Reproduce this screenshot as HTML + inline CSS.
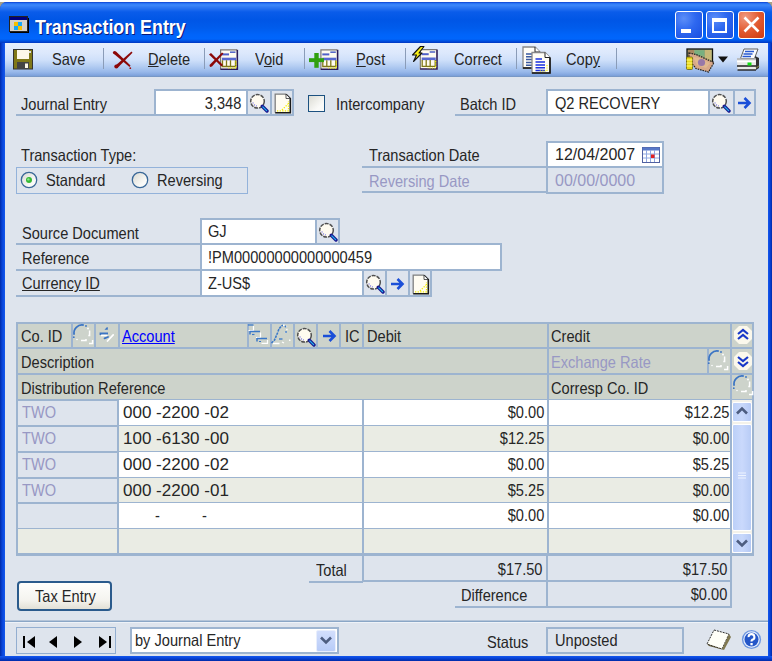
<!DOCTYPE html><html><head><meta charset="utf-8"><style>
html,body{margin:0;padding:0;width:772px;height:661px;overflow:hidden;background:#fff}
.a{position:absolute}
.t{position:absolute;font-family:"Liberation Sans",sans-serif;font-size:16.5px;line-height:18px;white-space:pre;color:#262626;transform:scaleX(0.885);transform-origin:left center}
.g{color:#9898c4}
.u{text-decoration:underline}
.ul{text-decoration:underline}
</style></head><body>
<div class="a" style="left:0px;top:2px;width:8px;height:8px;background:#a8a088"></div>
<div class="a" style="left:764px;top:2px;width:8px;height:8px;background:#a8a088"></div>
<div class="a" style="left:0px;top:2px;width:772px;height:659px;background:#0a3ed8;border-radius:7px 7px 0 0"></div>
<div class="a" style="left:0px;top:2px;width:772px;height:41px;border-radius:7px 7px 0 0;background:linear-gradient(#0a3fd0 0px,#2a74f4 1.5px,#3d88fa 3px,#2a74f2 6px,#0a5cea 10px,#0056e6 18px,#005cec 26px,#0064fa 33px,#0066fc 37px,#004ad8 39.5px,#0036c0 41px)"></div>
<div class="a" style="left:0px;top:43px;width:5px;height:618px;background:linear-gradient(90deg,#002aa8,#0844d8 45%,#1458ee)"></div>
<div class="a" style="left:768px;top:43px;width:4px;height:618px;background:linear-gradient(90deg,#1458ee,#0844d8 50%,#002aa8)"></div>
<div class="a" style="left:0px;top:656px;width:772px;height:5px;background:linear-gradient(#1458ee,#0844d8 45%,#002aa8)"></div>
<div class="a" style="left:5px;top:43px;width:763px;height:613px;background:#dee4ed"></div>
<svg class="a" style="left:9px;top:16px" width="20" height="17" viewBox="0 0 20 17"><rect x="0.5" y="0.5" width="18" height="15" fill="#d4d0c8" stroke="#222" stroke-width="1"/><rect x="1" y="1" width="17" height="3" fill="#000080"/><rect x="19" y="2" width="1" height="15" fill="#000"/><rect x="1" y="16" width="19" height="1" fill="#000"/><rect x="5" y="6" width="4" height="4" fill="#f8c000"/><rect x="9" y="6" width="4" height="4" fill="#18a8f8"/><rect x="5" y="10" width="4" height="4" fill="#18a8f8"/><rect x="9" y="10" width="4" height="4" fill="#f8c000"/></svg>
<div class="a" style="left:35px;top:15.5px;font-family:'Liberation Sans',sans-serif;font-weight:bold;font-size:19.5px;line-height:22px;color:#fff;text-shadow:1px 1px 0 #0a1878;white-space:pre;transform:scaleX(0.915);transform-origin:left center">Transaction Entry</div>
<div class="a" style="left:675px;top:11px;width:26px;height:26px;border:1px solid #fff;border-radius:3px;background:radial-gradient(circle at 30% 25%,#5c8ef8 0%,#2e68f0 45%,#1a4fe0 100%);overflow:hidden"><div class="a" style="left:5px;top:17px;width:10px;height:4px;background:#fff"></div></div>
<div class="a" style="left:706px;top:11px;width:26px;height:26px;border:1px solid #fff;border-radius:3px;background:radial-gradient(circle at 30% 25%,#5c8ef8 0%,#2e68f0 45%,#1a4fe0 100%);overflow:hidden"><div class="a" style="left:5px;top:6px;width:15px;height:15px;box-sizing:border-box;border:2px solid #fff;border-top-width:4px"></div></div>
<div class="a" style="left:738px;top:11px;width:25px;height:26px;border:1px solid #fff;border-radius:3px;background:radial-gradient(circle at 25% 20%,#f09a80 0%,#e25a30 50%,#cc3a10 100%);overflow:hidden"><svg class="a" style="left:0;top:0" width="26" height="26"><path d="M5.5 5.5 L19.5 19.5 M19.5 5.5 L5.5 19.5" stroke="#fff" stroke-width="2.6"/></svg></div>
<div class="a" style="left:5px;top:43px;width:763px;height:34px;background:linear-gradient(#e6effd 0%,#dce8fc 30%,#cfe0fa 50%,#b4cdf2 68%,#98b8ea 85%,#80a4de 95%,#7492bc 100%)"></div>
<div class="a" style="left:103px;top:48px;width:1px;height:21px;background:#8a9cb8"></div>
<div class="a" style="left:204px;top:48px;width:1px;height:21px;background:#8a9cb8"></div>
<div class="a" style="left:304px;top:48px;width:1px;height:21px;background:#8a9cb8"></div>
<div class="a" style="left:405px;top:48px;width:1px;height:21px;background:#8a9cb8"></div>
<div class="a" style="left:516px;top:48px;width:1px;height:21px;background:#8a9cb8"></div>
<div class="a" style="left:616px;top:48px;width:1px;height:21px;background:#8a9cb8"></div>
<svg class="a" style="left:13px;top:49px" width="20" height="21" viewBox="0 0 20 21"><rect x="0.5" y="0.5" width="19" height="19.5" fill="#807818" stroke="#333" stroke-width="1"/><rect x="4" y="1" width="12" height="9" fill="#fdf8e8"/><rect x="16" y="2" width="2" height="2" fill="#ddd"/><rect x="4" y="13" width="12" height="7" fill="#444"/><rect x="12" y="14.5" width="3" height="4.5" fill="#fdf8e8"/></svg>
<div class="t " style="left:52px;top:50.2px;">Save</div>
<svg class="a" style="left:112px;top:50px" width="22" height="20" viewBox="0 0 22 20"><path d="M1.5 3.5 L4 1.5 L18.5 15.5 L17.5 17 Z" fill="#8c0808"/><circle cx="2.6" cy="2.6" r="1.7" fill="#8c0808"/><circle cx="18.3" cy="18.2" r="0.9" fill="#a01010"/><path d="M19.5 1.5 L20.5 2.8 L6 17.5 L4 18 L3 16 Z" fill="#8c0808"/><circle cx="4.3" cy="16.5" r="2" fill="#8c0808"/></svg>
<div class="t " style="left:148px;top:50.2px;"><span class="u">D</span>elete</div>
<svg class="a" style="left:207px;top:48px" width="33" height="23" viewBox="0 0 33 23"><rect x="13" y="1.2" width="18" height="20.5" fill="#fffbf0"/><path d="M13.6 21.7 V1.7999999999999998 H30" stroke="#777" stroke-width="1.2" fill="none"/><path d="M30.3 1.7 V21.2 H13.5" stroke="#2a1a58" stroke-width="1.6" fill="none"/><rect x="23" y="3.4000000000000004" width="5.5" height="1.6" fill="#5868c8"/><rect x="15" y="5.4" width="7" height="2" fill="#5060c8"/><rect x="15" y="9.7" width="14" height="2.6" fill="#5868d0"/><path d="M15.5 12.2 V18.5 H28.5 V12.2 M19.5 12.2 V18.2 M23.5 12.2 V18.2" stroke="#807818" stroke-width="1.3" fill="none"/><path d="M29 13.2 V20.2 H21" stroke="#f0f000" stroke-width="1.2" stroke-dasharray="1.2 1.2" fill="none"/><path d="M2 6.5 L4 5 L16 17 L14.5 18.5 Z" fill="#8c0808"/><path d="M15 4.5 L16.5 5.5 L5 18.5 L3 19 L2.5 17 Z" fill="#8c0808"/></svg>
<div class="t " style="left:255px;top:50.2px;">V<span class="u">o</span>id</div>
<svg class="a" style="left:307px;top:48px" width="33" height="23" viewBox="0 0 33 23"><rect x="13.3" y="1.2" width="18" height="20.5" fill="#fffbf0"/><path d="M13.9 21.7 V1.7999999999999998 H30.3" stroke="#777" stroke-width="1.2" fill="none"/><path d="M30.6 1.7 V21.2 H13.8" stroke="#2a1a58" stroke-width="1.6" fill="none"/><rect x="23.3" y="3.4000000000000004" width="5.5" height="1.6" fill="#5868c8"/><rect x="15.3" y="5.4" width="7" height="2" fill="#5060c8"/><rect x="15.3" y="9.7" width="14" height="2.6" fill="#5868d0"/><path d="M15.8 12.2 V18.5 H28.8 V12.2 M19.8 12.2 V18.2 M23.8 12.2 V18.2" stroke="#807818" stroke-width="1.3" fill="none"/><path d="M29.3 13.2 V20.2 H21.3" stroke="#f0f000" stroke-width="1.2" stroke-dasharray="1.2 1.2" fill="none"/><rect x="7.3" y="5" width="4.4" height="14.8" fill="#30a010"/><rect x="2" y="10.2" width="15" height="3.9" fill="#30a010"/></svg>
<div class="t " style="left:356px;top:50.2px;"><span class="u">P</span>ost</div>
<svg class="a" style="left:408px;top:44px" width="32" height="28" viewBox="0 0 32 28"><rect x="11.7" y="5" width="18" height="20.5" fill="#fffbf0"/><path d="M12.299999999999999 25.5 V5.6 H28.7" stroke="#777" stroke-width="1.2" fill="none"/><path d="M29.0 5.5 V25 H12.2" stroke="#2a1a58" stroke-width="1.6" fill="none"/><rect x="21.7" y="7.2" width="5.5" height="1.6" fill="#5868c8"/><rect x="13.7" y="9.2" width="7" height="2" fill="#5060c8"/><rect x="13.7" y="13.5" width="14" height="2.6" fill="#5868d0"/><path d="M14.2 16 V22.3 H27.2 V16 M18.2 16 V22 M22.2 16 V22" stroke="#807818" stroke-width="1.3" fill="none"/><path d="M27.7 17 V24 H19.7" stroke="#f0f000" stroke-width="1.2" stroke-dasharray="1.2 1.2" fill="none"/><path d="M12.5 2.5 L16 2.5 L11 9 L14 9 L5.5 17.5 L8.5 11 L4.5 11 Z" fill="#f8f018" stroke="#101010" stroke-width="1.1" stroke-linejoin="round"/></svg>
<div class="t " style="left:454px;top:50.2px;">Correct</div>
<svg class="a" style="left:520px;top:44px" width="32" height="30" viewBox="0 0 32 30"><path d="M3 3 H15 L20 8 V24 H3 Z" fill="#fffdf6" stroke="#888" stroke-width="1.3"/><path d="M20 8 V24 H3" stroke="#111" stroke-width="1.6" fill="none"/><path d="M15 3 V8 H20" stroke="#222" stroke-width="1" fill="#fff"/><path d="M6 10 H13 M6 12.8 H13 M6 15.6 H13 M6 18.4 H13 M6 21.2 H13" stroke="#3a5aa0" stroke-width="1.5"/><path d="M12 8.5 H25 L30 13.5 V29.0 H12 Z" fill="#fffdf6" stroke="#888" stroke-width="1.3"/><path d="M30 13.5 V29.0 H12" stroke="#111" stroke-width="1.6" fill="none"/><path d="M25 8.5 V13.5 H30" stroke="#222" stroke-width="1" fill="#fff"/><path d="M15.5 15 H22 M15.5 18 H25 M15.5 21 H25 M15.5 23.8 H25 M15.5 26.6 H25" stroke="#1a30e0" stroke-width="1.5"/><path d="M27 21 V27 H19" stroke="#f0f000" stroke-width="1.2" stroke-dasharray="1.2 1.2" fill="none"/></svg>
<div class="t " style="left:566px;top:50.2px;">Cop<span class="u">y</span></div>
<svg class="a" style="left:685px;top:47px" width="31" height="27" viewBox="0 0 31 27"><rect x="2" y="2" width="25.5" height="13" fill="#90a878" stroke="#101010" stroke-width="1.3"/><rect x="3" y="3" width="6" height="11" fill="#a88860"/><rect x="20" y="3" width="6.5" height="11" fill="#c8b878"/><rect x="10" y="3.5" width="9" height="5" fill="#78b080"/><path d="M4 6 L11 7.5 L29 15.5 L23.5 25 L11 21.5 L4 13 Z" fill="#d8a888" stroke="#202020" stroke-width="1.2" stroke-dasharray="1.6 0.9"/><path d="M8 10 L14 11 L25 16 L21 21 L12 18 Z" fill="#e0b890"/><circle cx="16.5" cy="15.5" r="3.6" fill="#9878a8"/><rect x="1.5" y="10" width="6" height="12.5" rx="1" fill="#e8d818" stroke="#686010" stroke-width="0.8"/><path d="M1.5 13 H7.5 M1.5 16 H7.5 M1.5 19 H7.5" stroke="#fff880" stroke-width="1"/></svg>
<svg class="a" style="left:718px;top:56px" width="10" height="7" viewBox="0 0 10 7"><path d="M0 0.5 H10 L5 6.5 Z" fill="#111"/></svg>
<svg class="a" style="left:736px;top:47px" width="27" height="25" viewBox="0 0 27 25"><path d="M8 2 H22 L18.5 11.5 H4.5 Z" fill="#fafcff" stroke="#606060" stroke-width="1"/><path d="M9 4.5 H18 M7.5 7 H16.5 M6.5 9.5 H15" stroke="#2858d0" stroke-width="1.4"/><path d="M19 9 L23 11 V21 L20 23 Z" fill="#303030"/><path d="M1 12 H20 V23 H1.5 Z" fill="#e8e8e8"/><path d="M1 12 H20" stroke="#b0b0b0" stroke-width="1.5"/><path d="M1 14.5 H19.5" stroke="#fff" stroke-width="1.5"/><path d="M1 19 H20" stroke="#101010" stroke-width="1.4"/><path d="M1.5 23 H20" stroke="#202020" stroke-width="1.4"/><path d="M20 21 L23 19" stroke="#707040" stroke-width="1.5"/><rect x="11.5" y="15.5" width="4" height="3" fill="#10e010"/></svg>
<div class="t " style="left:21px;top:95.2px;">Journal Entry</div>
<div class="a" style="left:16px;top:114px;width:139px;height:2px;background:#9db4d0"></div>
<div class="a" style="left:154px;top:89px;width:140px;height:27px;box-sizing:border-box;border:2px solid #9db4d0;background:#fff"></div>
<div class="a" style="left:246px;top:91px;width:24px;height:23px;box-sizing:border-box;border-left:2px solid #9db4d0;background:#dee4ed"></div>
<div class="a" style="left:270px;top:91px;width:22px;height:23px;box-sizing:border-box;border-left:2px solid #9db4d0;background:#dee4ed"></div>
<div class="t " style="right:531px;top:94.2px;transform-origin:right center;">3,348</div>
<svg class="a" style="left:249px;top:93px" width="20" height="20" viewBox="0 0 20 20"><circle cx="8.5" cy="8.3" r="6.8" fill="#fffbf0" stroke="#505050" stroke-width="1.5" stroke-dasharray="4 1"/><path d="M3.8 9.5 A5 5 0 0 0 8 13" stroke="#6a6ae0" fill="none" stroke-width="1.1" stroke-dasharray="1.2 1.2"/><path d="M13.3 13.3 L18 18" stroke="#1a1a90" stroke-width="3.4" stroke-linecap="round"/><path d="M13.8 13.8 L17.6 17.6" stroke="#20b8f0" stroke-width="1.2" stroke-linecap="round"/></svg>
<svg class="a" style="left:274px;top:93px" width="18" height="21" viewBox="0 0 18 21"><path d="M1.5 1.5 H12 L16 5.5 V19.5 H1.5 Z" fill="#fffcf2"/><path d="M1.2 19.5 V1.2 H12" stroke="#808080" stroke-width="1.3" fill="none"/><path d="M12 1.2 L16.3 5.5 V19.8 H1.2" stroke="#1a1a1a" stroke-width="1.6" fill="none"/><path d="M12 1.5 V5.5 H16" stroke="#333" stroke-width="0.8" fill="#fff"/><path d="M3 17.8 H14.5 V8" stroke="#f4ec00" stroke-width="1.3" stroke-dasharray="1.3 1.3" fill="none"/><path d="M8 17 L14 11" stroke="#f4ec00" stroke-width="1.3" stroke-dasharray="1.3 1.3"/></svg>
<div class="a" style="left:308px;top:95px;width:17px;height:17px;box-sizing:border-box;border:1.5px solid #1c5180;background:linear-gradient(135deg,#dcdcd4,#fafaf8 70%)"></div>
<div class="t " style="left:336px;top:95.2px;">Intercompany</div>
<div class="t " style="left:460px;top:95.2px;">Batch ID</div>
<div class="a" style="left:455px;top:114px;width:92px;height:2px;background:#9db4d0"></div>
<div class="a" style="left:546px;top:89px;width:210px;height:27px;box-sizing:border-box;border:2px solid #9db4d0;background:#fff"></div>
<div class="a" style="left:708px;top:91px;width:25px;height:23px;box-sizing:border-box;border-left:2px solid #9db4d0;background:#dee4ed"></div>
<div class="a" style="left:733px;top:91px;width:21px;height:23px;box-sizing:border-box;border-left:2px solid #9db4d0;background:#dee4ed"></div>
<div class="t " style="left:555px;top:94.2px;">Q2 RECOVERY</div>
<svg class="a" style="left:711px;top:93px" width="20" height="20" viewBox="0 0 20 20"><circle cx="8.5" cy="8.3" r="6.8" fill="#fffbf0" stroke="#505050" stroke-width="1.5" stroke-dasharray="4 1"/><path d="M3.8 9.5 A5 5 0 0 0 8 13" stroke="#6a6ae0" fill="none" stroke-width="1.1" stroke-dasharray="1.2 1.2"/><path d="M13.3 13.3 L18 18" stroke="#1a1a90" stroke-width="3.4" stroke-linecap="round"/><path d="M13.8 13.8 L17.6 17.6" stroke="#20b8f0" stroke-width="1.2" stroke-linecap="round"/></svg>
<svg class="a" style="left:736px;top:95px" width="16" height="16" viewBox="0 0 16 16"><path d="M2 8 H13 M8.5 3 L13.5 8 L8.5 13" fill="none" stroke="#1b4fd8" stroke-width="2.6" stroke-linejoin="miter"/></svg>
<div class="t " style="left:21px;top:146.2px;">Transaction Type:</div>
<div class="a" style="left:16px;top:167px;width:232px;height:27px;box-sizing:border-box;border:1.5px solid #93b2da"></div>
<svg class="a" style="left:20px;top:171px" width="18" height="18" viewBox="0 0 18 18"><defs><linearGradient id="rg" x1="0" y1="0" x2="1" y2="1"><stop offset="0" stop-color="#d8d8d0"/><stop offset="0.7" stop-color="#fafaf8"/></linearGradient></defs><circle cx="9" cy="9" r="7.7" fill="url(#rg)" stroke="#3a6898" stroke-width="1.3"/><circle cx="9" cy="9" r="3" fill="#34b834"/><circle cx="8.4" cy="8.4" r="1.2" fill="#8ae88a"/></svg>
<svg class="a" style="left:131px;top:171px" width="18" height="18" viewBox="0 0 18 18"><defs><linearGradient id="rg" x1="0" y1="0" x2="1" y2="1"><stop offset="0" stop-color="#d8d8d0"/><stop offset="0.7" stop-color="#fafaf8"/></linearGradient></defs><circle cx="9" cy="9" r="7.7" fill="url(#rg)" stroke="#3a6898" stroke-width="1.3"/></svg>
<div class="t " style="left:46px;top:171.2px;">Standard</div>
<div class="t " style="left:157px;top:171.2px;">Reversing</div>
<div class="t " style="left:369px;top:146.2px;">Transaction Date</div>
<div class="a" style="left:362px;top:166px;width:185px;height:2px;background:#9db4d0"></div>
<div class="t g" style="left:369px;top:172.2px;">Reversing Date</div>
<div class="a" style="left:362px;top:191px;width:185px;height:2px;background:#9db4d0"></div>
<div class="a" style="left:546px;top:141px;width:118px;height:53px;box-sizing:border-box;border:2px solid #9db4d0;background:#dee4ed"></div>
<div class="a" style="left:548px;top:143px;width:114px;height:23px;background:#fff"></div>
<div class="a" style="left:548px;top:166px;width:114px;height:2px;background:#9db4d0"></div>
<div class="t " style="left:554.5px;top:145.2px;transform:scaleX(0.97)">12/04/2007</div>
<div class="t g" style="left:554.5px;top:171.2px;transform:scaleX(0.97)">00/00/0000</div>
<svg class="a" style="left:642px;top:147px" width="18" height="16" viewBox="0 0 18 16"><rect x="0.5" y="0.5" width="17" height="15" fill="#fff" stroke="#5060a0" stroke-width="1"/><rect x="0.5" y="0.5" width="17" height="3" fill="#5878c8"/><path d="M4.5 3 V15 M8.5 3 V15 M12.5 3 V15 M1 7 H17 M1 11 H17" stroke="#90a8e0" stroke-width="1"/><rect x="9" y="7.5" width="3.5" height="3.5" fill="#e02020"/></svg>
<div class="t " style="left:22px;top:224.2px;">Source Document</div>
<div class="a" style="left:16px;top:243px;width:186px;height:2px;background:#9db4d0"></div>
<div class="t " style="left:22px;top:249.2px;">Reference</div>
<div class="a" style="left:16px;top:269px;width:186px;height:2px;background:#9db4d0"></div>
<div class="t u" style="left:22px;top:274.2px;">Currency ID</div>
<div class="a" style="left:16px;top:295px;width:186px;height:2px;background:#9db4d0"></div>
<div class="a" style="left:200px;top:218px;width:140px;height:27px;box-sizing:border-box;border:2px solid #9db4d0;background:#fff"></div>
<div class="a" style="left:315px;top:220px;width:23px;height:23px;box-sizing:border-box;border-left:2px solid #9db4d0;background:#dee4ed"></div>
<svg class="a" style="left:318px;top:222px" width="20" height="20" viewBox="0 0 20 20"><circle cx="8.5" cy="8.3" r="6.8" fill="#fffbf0" stroke="#505050" stroke-width="1.5" stroke-dasharray="4 1"/><path d="M3.8 9.5 A5 5 0 0 0 8 13" stroke="#6a6ae0" fill="none" stroke-width="1.1" stroke-dasharray="1.2 1.2"/><path d="M13.3 13.3 L18 18" stroke="#1a1a90" stroke-width="3.4" stroke-linecap="round"/><path d="M13.8 13.8 L17.6 17.6" stroke="#20b8f0" stroke-width="1.2" stroke-linecap="round"/></svg>
<div class="t " style="left:208px;top:222.2px;">GJ</div>
<div class="a" style="left:200px;top:243px;width:302px;height:28px;box-sizing:border-box;border:2px solid #9db4d0;background:#fff"></div>
<div class="t " style="left:208px;top:248.2px;">!PM00000000000000459</div>
<div class="a" style="left:200px;top:269px;width:232px;height:28px;box-sizing:border-box;border:2px solid #9db4d0;background:#fff"></div>
<div class="a" style="left:362px;top:271px;width:23px;height:24px;box-sizing:border-box;border-left:2px solid #9db4d0;background:#dee4ed"></div>
<div class="a" style="left:385px;top:271px;width:23px;height:24px;box-sizing:border-box;border-left:2px solid #9db4d0;background:#dee4ed"></div>
<div class="a" style="left:408px;top:271px;width:22px;height:24px;box-sizing:border-box;border-left:2px solid #9db4d0;background:#dee4ed"></div>
<div class="t " style="left:208px;top:274.2px;">Z-US$</div>
<svg class="a" style="left:365px;top:274px" width="20" height="20" viewBox="0 0 20 20"><circle cx="8.5" cy="8.3" r="6.8" fill="#fffbf0" stroke="#505050" stroke-width="1.5" stroke-dasharray="4 1"/><path d="M3.8 9.5 A5 5 0 0 0 8 13" stroke="#6a6ae0" fill="none" stroke-width="1.1" stroke-dasharray="1.2 1.2"/><path d="M13.3 13.3 L18 18" stroke="#1a1a90" stroke-width="3.4" stroke-linecap="round"/><path d="M13.8 13.8 L17.6 17.6" stroke="#20b8f0" stroke-width="1.2" stroke-linecap="round"/></svg>
<svg class="a" style="left:389px;top:276px" width="16" height="16" viewBox="0 0 16 16"><path d="M2 8 H13 M8.5 3 L13.5 8 L8.5 13" fill="none" stroke="#1b4fd8" stroke-width="2.6" stroke-linejoin="miter"/></svg>
<svg class="a" style="left:412px;top:274px" width="18" height="21" viewBox="0 0 18 21"><path d="M1.5 1.5 H12 L16 5.5 V19.5 H1.5 Z" fill="#fffcf2"/><path d="M1.2 19.5 V1.2 H12" stroke="#808080" stroke-width="1.3" fill="none"/><path d="M12 1.2 L16.3 5.5 V19.8 H1.2" stroke="#1a1a1a" stroke-width="1.6" fill="none"/><path d="M12 1.5 V5.5 H16" stroke="#333" stroke-width="0.8" fill="#fff"/><path d="M3 17.8 H14.5 V8" stroke="#f4ec00" stroke-width="1.3" stroke-dasharray="1.3 1.3" fill="none"/><path d="M8 17 L14 11" stroke="#f4ec00" stroke-width="1.3" stroke-dasharray="1.3 1.3"/></svg>
<div class="a" style="left:16px;top:322px;width:738px;height:234px;box-sizing:border-box;border:2px solid #9db4d0;background:#dee4ed"></div>
<div class="a" style="left:18px;top:324px;width:734px;height:76px;background:#cdd3cb"></div>
<div class="a" style="left:18px;top:347px;width:734px;height:2px;background:#9db4d0"></div>
<div class="a" style="left:18px;top:373px;width:734px;height:2px;background:#9db4d0"></div>
<div class="a" style="left:18px;top:399px;width:734px;height:2px;background:#9db4d0"></div>
<div class="a" style="left:730px;top:322px;width:2px;height:233px;background:#9db4d0"></div>
<div class="a" style="left:71px;top:324px;width:2px;height:24px;background:#9db4d0"></div>
<div class="a" style="left:94px;top:324px;width:1.5px;height:24px;background:#9db4d0"></div>
<div class="a" style="left:118px;top:324px;width:2px;height:24px;background:#9db4d0"></div>
<div class="a" style="left:247px;top:324px;width:1.5px;height:24px;background:#9db4d0"></div>
<div class="a" style="left:270px;top:324px;width:1.5px;height:24px;background:#9db4d0"></div>
<div class="a" style="left:293px;top:324px;width:1.5px;height:24px;background:#9db4d0"></div>
<div class="a" style="left:316px;top:324px;width:1.5px;height:24px;background:#9db4d0"></div>
<div class="a" style="left:339px;top:324px;width:1.5px;height:24px;background:#9db4d0"></div>
<div class="a" style="left:362px;top:324px;width:2px;height:24px;background:#9db4d0"></div>
<div class="a" style="left:547px;top:324px;width:2px;height:24px;background:#9db4d0"></div>
<div class="t " style="left:21px;top:327.2px;">Co. ID</div>
<div class="t u" style="left:122px;top:327.2px;color:#0000ff">Account</div>
<div class="t " style="left:345px;top:327.2px;">IC</div>
<div class="t " style="left:367px;top:327.2px;">Debit</div>
<div class="t " style="left:551px;top:327.2px;">Credit</div>
<div class="t " style="left:21px;top:353.2px;">Description</div>
<div class="a" style="left:547px;top:348px;width:2px;height:26px;background:#9db4d0"></div>
<div class="a" style="left:707px;top:348px;width:2px;height:26px;background:#9db4d0"></div>
<div class="t g" style="left:551px;top:353.2px;">Exchange Rate</div>
<div class="t " style="left:21px;top:379.2px;">Distribution Reference</div>
<div class="a" style="left:547px;top:374px;width:2px;height:26px;background:#9db4d0"></div>
<div class="t " style="left:551px;top:379.2px;">Corresp Co. ID</div>
<svg class="a" style="left:71px;top:322px" width="23" height="23" viewBox="0 0 23 23"><path d="M3.2 12.8 A8 8 0 0 1 12.8 3.2" stroke="#3a74c4" stroke-width="1.7" fill="none"/><circle cx="15" cy="4" r="0.9" fill="#3a74c4"/><circle cx="2.8" cy="15.2" r="0.9" fill="#3a74c4"/><circle cx="17" cy="6.5" r="0.9" fill="#fff"/><circle cx="6" cy="17.5" r="0.8" fill="#fff"/><path d="M18.6 8.5 V13.5 H17.3" stroke="#fff" stroke-width="1.5" fill="none"/><path d="M10 18.6 H15 V17" stroke="#fff" stroke-width="1.5" fill="none"/><path d="M18 21.6 H21.6 V18" stroke="#fff" stroke-width="1.5" fill="none"/></svg>
<svg class="a" style="left:706px;top:348px" width="23" height="23" viewBox="0 0 23 23"><path d="M3.2 12.8 A8 8 0 0 1 12.8 3.2" stroke="#3a74c4" stroke-width="1.7" fill="none"/><circle cx="15" cy="4" r="0.9" fill="#3a74c4"/><circle cx="2.8" cy="15.2" r="0.9" fill="#3a74c4"/><circle cx="17" cy="6.5" r="0.9" fill="#fff"/><circle cx="6" cy="17.5" r="0.8" fill="#fff"/><path d="M18.6 8.5 V13.5 H17.3" stroke="#fff" stroke-width="1.5" fill="none"/><path d="M10 18.6 H15 V17" stroke="#fff" stroke-width="1.5" fill="none"/><path d="M18 21.6 H21.6 V18" stroke="#fff" stroke-width="1.5" fill="none"/></svg>
<svg class="a" style="left:731px;top:373px" width="23" height="23" viewBox="0 0 23 23"><path d="M3.2 12.8 A8 8 0 0 1 12.8 3.2" stroke="#3a74c4" stroke-width="1.7" fill="none"/><circle cx="15" cy="4" r="0.9" fill="#3a74c4"/><circle cx="2.8" cy="15.2" r="0.9" fill="#3a74c4"/><circle cx="17" cy="6.5" r="0.9" fill="#fff"/><circle cx="6" cy="17.5" r="0.8" fill="#fff"/><path d="M18.6 8.5 V13.5 H17.3" stroke="#fff" stroke-width="1.5" fill="none"/><path d="M10 18.6 H15 V17" stroke="#fff" stroke-width="1.5" fill="none"/><path d="M18 21.6 H21.6 V18" stroke="#fff" stroke-width="1.5" fill="none"/></svg>
<svg class="a" style="left:96px;top:322px" width="22" height="26" viewBox="0 0 22 26"><path d="M8.5 7.7 L10.8 5.2 H11.8 V7.7 Z" fill="#3a74c4"/><path d="M4.5 13 V11.5 H12" stroke="#3a74c4" stroke-width="1.8" fill="none"/><path d="M5 13.5 H11.5" stroke="#fff" stroke-width="1.6"/><path d="M8.5 16.3 L12 15" stroke="#3a74c4" stroke-width="1.8" stroke-linecap="round"/><path d="M11.5 19 L17.2 12.8" stroke="#fff" stroke-width="1.7" stroke-linecap="round"/></svg>
<svg class="a" style="left:246px;top:322px" width="24" height="26" viewBox="0 0 24 26"><path d="M2 3 H7.5" stroke="#3a78c8" stroke-width="1.3"/><path d="M7.5 4 V8.5 H2.5" stroke="#fff" stroke-width="1.2" fill="none"/><path d="M4 9 V12.5 M4 9.6 H14" stroke="#3a78c8" stroke-width="1.5" fill="none"/><path d="M6 12.5 H8.5" stroke="#3a78c8" stroke-width="1.2"/><path d="M14.5 10.5 V15.5 H10" stroke="#fff" stroke-width="1.2" fill="none"/><path d="M11 16 V19.5 M11 16.6 H21" stroke="#3a78c8" stroke-width="1.5" fill="none"/><path d="M13 19.5 H15" stroke="#3a78c8" stroke-width="1.2"/><path d="M21.5 18 V21.3 H15.5" stroke="#fff" stroke-width="1.2" fill="none"/></svg>
<svg class="a" style="left:270px;top:322px" width="24" height="26" viewBox="0 0 24 26"><path d="M1.5 21 L4.5 18 L7.5 11 Q9.5 4.5 13 3.2" stroke="#3a78c8" stroke-width="1.6" fill="none" stroke-dasharray="2.5 0.8"/><path d="M13 3.2 Q17 3 17 7 Q16.5 10 14 12" stroke="#fff" stroke-width="1.4" fill="none" stroke-dasharray="1.5 1.5"/><circle cx="15.5" cy="4.5" r="0.9" fill="#3a78c8"/><circle cx="16" cy="10" r="0.9" fill="#3a78c8"/><path d="M9 17 H12.5" stroke="#3a78c8" stroke-width="1.3"/><path d="M3 21.5 H9.5 M12 20 L14 21" stroke="#fff" stroke-width="1.3"/><rect x="19" y="17.5" width="1.5" height="1.5" fill="#fff"/></svg>
<svg class="a" style="left:296px;top:327px" width="20" height="20" viewBox="0 0 20 20"><circle cx="8.5" cy="8.3" r="6.8" fill="#fffbf0" stroke="#505050" stroke-width="1.5" stroke-dasharray="4 1"/><path d="M3.8 9.5 A5 5 0 0 0 8 13" stroke="#6a6ae0" fill="none" stroke-width="1.1" stroke-dasharray="1.2 1.2"/><path d="M13.3 13.3 L18 18" stroke="#1a1a90" stroke-width="3.4" stroke-linecap="round"/><path d="M13.8 13.8 L17.6 17.6" stroke="#20b8f0" stroke-width="1.2" stroke-linecap="round"/></svg>
<svg class="a" style="left:321px;top:328px" width="16" height="16" viewBox="0 0 16 16"><path d="M2 8 H13 M8.5 3 L13.5 8 L8.5 13" fill="none" stroke="#1b4fd8" stroke-width="2.6" stroke-linejoin="miter"/></svg>
<svg class="a" style="left:733px;top:325px" width="20" height="20" viewBox="0 0 20 20"><path d="M6 1 H14 L19 6 V14 L14 19 H6 L1 14 V6 Z" fill="#fbf8ec"/><path d="M5 9 L10 5 L15 9 M5 14 L10 10 L15 14" stroke="#1838c8" stroke-width="2.2" fill="none"/></svg>
<svg class="a" style="left:733px;top:351px" width="20" height="20" viewBox="0 0 20 20"><path d="M6 1 H14 L19 6 V14 L14 19 H6 L1 14 V6 Z" fill="#fbf8ec"/><path d="M5 6 L10 10 L15 6 M5 11 L10 15 L15 11" stroke="#1838c8" stroke-width="2.2" fill="none"/></svg>
<div class="a" style="left:118px;top:400px;width:612px;height:26px;background:#ffffff"></div>
<div class="a" style="left:18px;top:425px;width:713px;height:2px;background:#9db4d0"></div>
<div class="t g" style="left:22px;top:403.2px;">TWO</div>
<div class="t " style="left:123px;top:403.2px;transform:scaleX(1.03)">000 -2200 -02</div>
<div class="t " style="right:227.5px;top:403.2px;transform-origin:right center;">$0.00</div>
<div class="t " style="right:42.5px;top:403.2px;transform-origin:right center;">$12.25</div>
<div class="a" style="left:118px;top:426px;width:612px;height:26px;background:#eaece4"></div>
<div class="a" style="left:18px;top:451px;width:713px;height:2px;background:#9db4d0"></div>
<div class="t g" style="left:22px;top:429.2px;">TWO</div>
<div class="t " style="left:123px;top:429.2px;transform:scaleX(1.03)">100 -6130 -00</div>
<div class="t " style="right:227.5px;top:429.2px;transform-origin:right center;">$12.25</div>
<div class="t " style="right:42.5px;top:429.2px;transform-origin:right center;">$0.00</div>
<div class="a" style="left:118px;top:452px;width:612px;height:26px;background:#ffffff"></div>
<div class="a" style="left:18px;top:477px;width:713px;height:2px;background:#9db4d0"></div>
<div class="t g" style="left:22px;top:455.2px;">TWO</div>
<div class="t " style="left:123px;top:455.2px;transform:scaleX(1.03)">000 -2200 -02</div>
<div class="t " style="right:227.5px;top:455.2px;transform-origin:right center;">$0.00</div>
<div class="t " style="right:42.5px;top:455.2px;transform-origin:right center;">$5.25</div>
<div class="a" style="left:118px;top:478px;width:612px;height:25px;background:#eaece4"></div>
<div class="a" style="left:18px;top:502px;width:713px;height:2px;background:#9db4d0"></div>
<div class="t g" style="left:22px;top:481.2px;">TWO</div>
<div class="t " style="left:123px;top:481.2px;transform:scaleX(1.03)">000 -2200 -01</div>
<div class="t " style="right:227.5px;top:481.2px;transform-origin:right center;">$5.25</div>
<div class="t " style="right:42.5px;top:481.2px;transform-origin:right center;">$0.00</div>
<div class="a" style="left:118px;top:503px;width:612px;height:26px;background:#ffffff"></div>
<div class="a" style="left:18px;top:528px;width:713px;height:2px;background:#9db4d0"></div>
<div class="t " style="right:227.5px;top:506.2px;transform-origin:right center;">$0.00</div>
<div class="t " style="right:42.5px;top:506.2px;transform-origin:right center;">$0.00</div>
<div class="a" style="left:118px;top:529px;width:612px;height:25px;background:#eaece4"></div>
<div class="a" style="left:18px;top:529px;width:100px;height:25px;background:#eaece4"></div>
<div class="a" style="left:117px;top:400px;width:2px;height:155px;background:#9db4d0"></div>
<div class="a" style="left:362px;top:400px;width:2px;height:155px;background:#9db4d0"></div>
<div class="a" style="left:547px;top:400px;width:2px;height:155px;background:#9db4d0"></div>
<div class="t " style="left:155px;top:506.2px;">-</div>
<div class="t " style="left:202px;top:506.2px;">-</div>
<div class="a" style="left:732px;top:400px;width:20px;height:154px;background:#f4f2ea"></div>
<div class="a" style="left:732px;top:402px;width:20px;height:20px;box-sizing:border-box;border:1px solid #fff;border-radius:2px;background:linear-gradient(90deg,#bcd0f8,#c8d8fb 50%,#b4c8f4)"></div>
<svg class="a" style="left:734px;top:404px" width="16" height="14" viewBox="0 0 16 14"><path d="M3 9.5 L8 4.5 L13 9.5" stroke="#4d5d80" stroke-width="2.6" fill="none"/></svg>
<div class="a" style="left:732px;top:533px;width:20px;height:20px;box-sizing:border-box;border:1px solid #fff;border-radius:2px;background:linear-gradient(90deg,#bcd0f8,#c8d8fb 50%,#b4c8f4)"></div>
<svg class="a" style="left:734px;top:536px" width="16" height="14" viewBox="0 0 16 14"><path d="M3 4.5 L8 9.5 L13 4.5" stroke="#4d5d80" stroke-width="2.6" fill="none"/></svg>
<div class="a" style="left:732px;top:424px;width:20px;height:107px;box-sizing:border-box;border:1px solid #fff;border-radius:2px;background:linear-gradient(90deg,#bcd0f8,#cad9fc 50%,#b8ccf6)"></div>
<svg class="a" style="left:737px;top:472px" width="10" height="8" viewBox="0 0 10 8"><path d="M1 1 H9 M1 3.5 H9 M1 6 H9" stroke="#eef4ff" stroke-width="1"/></svg>
<div class="a" style="left:16px;top:553px;width:738px;height:3px;background:#9db4d0"></div>
<div class="t " style="left:316px;top:561.2px;">Total</div>
<div class="a" style="left:309px;top:581px;width:54px;height:2px;background:#9db4d0"></div>
<div class="a" style="left:362px;top:555px;width:2px;height:27px;background:#9db4d0"></div>
<div class="a" style="left:362px;top:580px;width:370px;height:2px;background:#9db4d0"></div>
<div class="a" style="left:546px;top:555px;width:2px;height:53px;background:#9db4d0"></div>
<div class="a" style="left:730px;top:555px;width:2px;height:53px;background:#9db4d0"></div>
<div class="a" style="left:455px;top:606px;width:277px;height:2px;background:#9db4d0"></div>
<div class="t " style="right:230px;top:560.2px;transform-origin:right center;">$17.50</div>
<div class="t " style="right:45px;top:560.2px;transform-origin:right center;">$17.50</div>
<div class="t " style="left:461px;top:586.2px;">Difference</div>
<div class="t " style="right:45px;top:585.2px;transform-origin:right center;">$0.00</div>
<div class="a" style="left:17px;top:581px;width:95px;height:30px;box-sizing:border-box;border:2px solid #2a5a8c;border-radius:4px;background:linear-gradient(#fefefc,#f5f4ef 65%,#e2e0d6)"></div>
<div class="t " style="left:35px;top:587.2px;">Tax Entry</div>
<div class="a" style="left:5px;top:620px;width:763px;height:1px;background:#b4c4d8"></div>
<div class="a" style="left:5px;top:621px;width:763px;height:1px;background:#8aa6c6"></div>
<div class="a" style="left:5px;top:622px;width:763px;height:1px;background:#eef2f8"></div>
<div class="a" style="left:16px;top:627px;width:100px;height:27px;box-sizing:border-box;border:1.5px solid #93aed0"></div>
<svg class="a" style="left:22px;top:634px" width="92" height="16" viewBox="0 0 92 16"><path d="M2 2 V14" stroke="#000" stroke-width="2"/><path d="M13 2 L5 8 L13 14 Z" fill="#000"/><path d="M35 2 L27 8 L35 14 Z" fill="#000"/><path d="M52 2 L60 8 L52 14 Z" fill="#000"/><path d="M77 2 L85 8 L77 14 Z" fill="#000"/><path d="M88 2 V14" stroke="#000" stroke-width="2"/></svg>
<div class="a" style="left:130px;top:627px;width:209px;height:27px;box-sizing:border-box;border:2px solid #9db4d0;background:#fff"></div>
<div class="t " style="left:135px;top:631.2px;">by Journal Entry</div>
<div class="a" style="left:316px;top:630px;width:20px;height:22px;box-sizing:border-box;border:1px solid #e8eefc;border-radius:2px;background:linear-gradient(#d2defc,#b8ccf8)"></div>
<svg class="a" style="left:318px;top:634px" width="16" height="13" viewBox="0 0 16 13"><path d="M3 3.5 L8 8.5 L13 3.5" stroke="#4d5d80" stroke-width="2.6" fill="none"/></svg>
<div class="t " style="left:487px;top:633.2px;">Status</div>
<div class="a" style="left:546px;top:627px;width:138px;height:27px;box-sizing:border-box;border:2px solid #9db4d0"></div>
<div class="t " style="left:555px;top:631.2px;">Unposted</div>
<svg class="a" style="left:705px;top:628px" width="28" height="24" viewBox="0 0 28 24"><path d="M9 2 L24 6 L17 21 L2 16 Z" fill="#fffff8" stroke="#303030" stroke-width="1" stroke-dasharray="2 1"/><path d="M24 6 L26 9 L19 22 L17 21" fill="#807850"/><path d="M2 16 L17 21 L19 22 L4 18 Z" fill="#585030"/></svg>
<svg class="a" style="left:741px;top:629px" width="21" height="21" viewBox="0 0 21 21"><circle cx="10.5" cy="10.5" r="9.6" fill="#6d96e0"/><circle cx="10.5" cy="10.5" r="8.2" fill="#e6eefc"/><circle cx="10.5" cy="10.5" r="7" fill="#2456c8"/><path d="M7.6 8.2 A2.9 2.9 0 1 1 11.2 10.8 Q10.5 11.3 10.5 12.6" stroke="#fff" stroke-width="2.1" fill="none"/><rect x="9.4" y="14" width="2.3" height="2.3" fill="#fff"/></svg>
</body></html>
